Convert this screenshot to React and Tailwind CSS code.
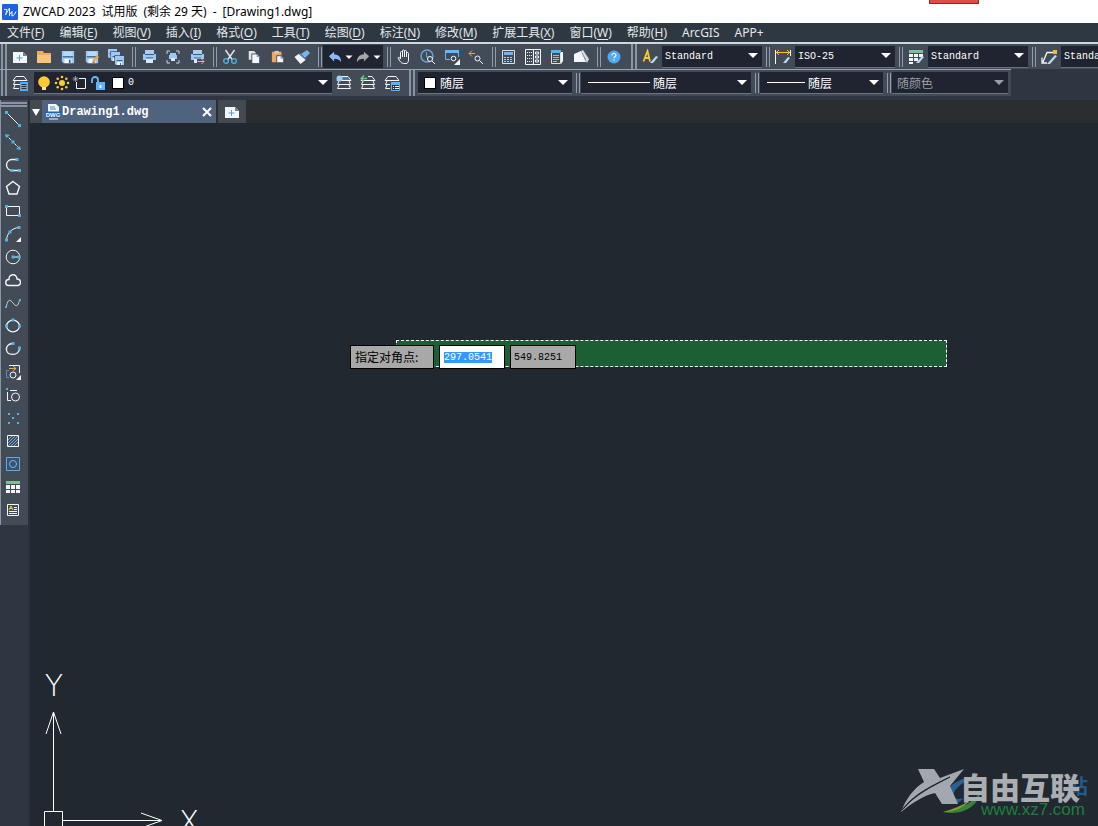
import { useEffect, useRef } from 'react';

const MENUS = [
  ['文件', 'F'],
  ['编辑', 'E'],
  ['视图', 'V'],
  ['插入', 'I'],
  ['格式', 'O'],
  ['工具', 'T'],
  ['绘图', 'D'],
  ['标注', 'N'],
  ['修改', 'M'],
  ['扩展工具', 'X'],
  ['窗口', 'W'],
  ['帮助', 'H'],
  ['ArcGIS'],
  ['APP+'],
];

const Svg = ({ children, size = 16 }) => (
  <svg width={size} height={size} viewBox="0 0 16 16" fill="none" stroke="none" aria-hidden="true">
    {children}
  </svg>
);

const W = '#f4f7fa';
const C = '#4db4e6';

const Floppy = () => (
  <>
    <path d="M1 1h14v14H3l-2-2z" fill="#9cc8f7" />
    <path d="M3 2h10v5H3z" fill="#b9dafb" />
    <path d="M2 7h12v1.500H2z" fill="#41658c" />
    <path d="M4 10h8v5H4z" fill={W} />
    <path d="M9 11h2v4H9z" fill="#41658c" />
  </>
);

const SmallFloppy = ({ x, y }) => (
  <g transform={`translate(${x} ${y})`}>
    <path d="M-.7-.7h10.400v10.400H-.7z" fill="#434b57" />
    <path d="M0 0h9v9H1L0 8z" fill="#9cc8f7" />
    <path d="M1.500 4h6v1h-6z" fill="#41658c" />
    <path d="M2 6h5v3H2z" fill={W} />
    <path d="M5 7h1v2H5z" fill="#41658c" />
  </g>
);

const Printer = () => (
  <>
    <path d="M4 1h9v4H4z" fill="#a9cdf5" />
    <path d="M2 5h13v6H2z" fill="#9cc8f7" />
    <path d="M4 5h9v1H4z" fill="#3d5878" />
    <path d="M5 9h7v5H5z" fill="#d9eafd" />
    <path d="M5 9h7" stroke="#3d5878" />
  </>
);

const Layers = () => (
  <path d="M4 1.500h8l3 4H1zM1.500 9.500h13M3 6l-1.500 3.500M13 6l1.500 3.500M1.500 13.500h13M3 10l-1.500 3.500M13 10l1.500 3.500" stroke={W} />
);

const icons = {
  newFile: (
    <>
      <path d="M1 3h10l4 4v7H1z" fill={W} />
      <path d="M11 3v4h4z" fill="#6f8193" />
      <path d="M7.500 6v6M4.500 9h6" stroke="#5a9fd0" />
    </>
  ),
  open: (
    <>
      <path d="M1 2h6l1 2h7v10H1z" fill="#f0aa62" />
      <path d="M1 6h14v8H1z" fill="#fbc27e" />
    </>
  ),
  save: <Floppy />,
  saveAs: (
    <>
      <Floppy />
      <path d="M8 15l1-4 5-5 2 2-5 5z" fill="#f0a54a" />
    </>
  ),
  saveAll: (
    <>
      <SmallFloppy x={0} y={0} />
      <SmallFloppy x={3} y={3} />
      <SmallFloppy x={7} y={7} />
    </>
  ),
  print: <Printer />,
  preview: (
    <>
      <path d="M2 5V2h3M11 2h3v3M14 11v3h-3M5 14H2v-3" stroke="#c5d5e4" />
      <path d="M5 4h6v2H5zM4 6h8v4H4z" fill="#9cc8f7" />
      <path d="M6 9h4v3H6z" fill="#d9eafd" />
    </>
  ),
  publish: (
    <>
      <Printer />
      <path d="M8 10h8v6H8z" fill="#434b57" />
      <path d="M8.500 12.500H15M12.500 10l2.500 2.500-2.500 2.500" stroke="#e9bd57" />
    </>
  ),
  cut: (
    <>
      <path d="M3.500 1l7 10M12.500 1l-7 10" stroke="#dce3ea" strokeWidth="1.500" />
      <circle cx="4" cy="12" r="2.300" stroke={C} strokeWidth="1.300" />
      <circle cx="12" cy="12" r="2.300" stroke={C} strokeWidth="1.300" />
    </>
  ),
  copy: (
    <>
      <path d="M2 1h6l2 2v8H2z" fill="#dfe4e9" />
      <path d="M5.500 4.500h6l3 3v8h-9z" fill={W} stroke="#3f4753" />
      <path d="M11.500 4.500v3h3" stroke="#7a8794" />
    </>
  ),
  paste: (
    <>
      <path d="M1 2h11v12H1z" fill="#f2a65c" />
      <path d="M4 1h5v3H4z" fill="#c9cfd6" />
      <path d="M6.500 6.500h5l3 3v5h-8z" fill={W} stroke="#3f4753" />
      <path d="M11.500 6.500v3h3" stroke="#7a8794" />
    </>
  ),
  brush: (
    <>
      <path d="M13 1l3 3-5 5-4-4z" fill="#77b5ef" />
      <path d="M6 4l6 6-2 2-6-6z" fill="#4d80b8" />
      <path d="M4.500 5l7 6-5 4-6-7z" fill={W} />
    </>
  ),
  undo: <path d="M1 7l6-5v3c5 0 8 3 8 9-2-3-4-4-8-4v3z" fill="#8cbcf5" />,
  redo: <path d="M15 7L9 2v3c-5 0-8 3-8 9 2-3 4-4 8-4v3z" fill="#a4a8ad" />,
  pan: (
    <path
      d="M4.500 10V3.500a1 1 0 0 1 2 0V8 2a1 1 0 0 1 2 0v6-5.500a1 1 0 0 1 2 0V8 4.500a1 1 0 0 1 2 0V11c0 2-1 3.500-2.500 3.500H7.500C5 14.500 3.500 11.500 2 9c0-1 1.500-1 2.500 1z"
      stroke={W}
    />
  ),
  zoomTime: (
    <>
      <circle cx="7" cy="7" r="6" stroke="#6aa7de" strokeWidth="1.400" />
      <path d="M6.500 3v5H9" stroke={C} />
      <circle cx="10" cy="10" r="2.500" stroke={W} fill="#434b57" />
      <path d="M12 12l3 3" stroke={W} />
    </>
  ),
  zoomWindow: (
    <>
      <path d="M6 10.500H1.500v-8h13V8" stroke="#6db4f2" />
      <path d="M1 1h14v3H1z" fill="#6db4f2" />
      <circle cx="9.500" cy="9.500" r="2.300" stroke={W} />
      <path d="M16 10v6h-6z" fill={W} />
    </>
  ),
  zoomPrev: (
    <>
      <path d="M1 4.500h6M4 1.500l-3 3 3 3" stroke="#d7ad68" />
      <circle cx="9.500" cy="9.500" r="2.500" stroke={W} />
      <path d="M11.500 11.500l3.500 3.500" stroke={W} />
    </>
  ),
  calc: (
    <>
      <path d="M1.500 1.500h12v13h-12z" stroke="#d7e1ea" />
      <path d="M3 3h9v3H3z" fill="#70b4ed" />
      <path d="M3 8.500h9M3 10.500h9M3 12.500h9" stroke="#a9d2f5" strokeDasharray="2 1" />
    </>
  ),
  palette: (
    <>
      <path d="M.5.5h15v15H.5zM8.500 1v14" stroke={W} />
      <path d="M2 3.500h5M2 6.500h5M2 9.500h5M2 12.500h5" stroke={W} strokeDasharray="1 1" />
      <path d="M10.500 3v2h3V3zM10.500 7v2h3V7zM10.500 11v2h3v-2z" stroke={W} />
    </>
  ),
  sheet: (
    <>
      <path d="M2.500 1.500h9v13h-9z" stroke="#d7e1ea" />
      <path d="M2 1h10v3H2z" fill="#5eb0f4" />
      <path d="M12 3h2v9l-2 3z" fill={W} />
      <path d="M4 6.500h6M4 8.500h6M4 10.500h6M4 12.500h4" stroke="#8dbcf0" />
    </>
  ),
  cleanup: (
    <>
      <path d="M1 5l7-3 5 11H1z" fill={W} />
      <path d="M8 2l2-1 6 9-2 4z" fill="#d9dce0" />
      <path d="M9 4l4 7" stroke="#8a929b" />
    </>
  ),
  help: (
    <>
      <circle cx="8" cy="8" r="6.500" fill="#4eaaf2" />
      <path d="M6 6.500c0-3 4-2.500 4-.3 0 1.300-2 1.300-2 3M8 10.500v1.300" stroke={W} strokeWidth="1.200" />
    </>
  ),
  textStyle: (
    <>
      <path d="M1.500 12.500L5.500 2 8 12.500M3 9h4.500" stroke="#f2c838" strokeWidth="1.800" />
      <path d="M8 14l6-7 2 1-5 6z" fill="#b9dcf4" />
    </>
  ),
  dimStyle: (
    <>
      <path d="M.5 1v14M15.500 1v6" stroke={W} />
      <path d="M1 3.500h14M4 1L1.500 3.500 4 6M12 1l2.500 2.500L12 6" stroke="#f2c838" />
      <path d="M8 14l5-6 2 1-4 5z" fill="#b9dcf4" />
    </>
  ),
  tableStyle: (
    <>
      <path d="M1 1h14v3H1z" fill="#7fc08f" />
      <path d="M1 5h4v3H1zM6 5h4v3H6zM11 5h4v3h-4zM1 9h4v3H1zM6 9h4v3H6zM1 13h4v2H1z" fill={W} />
      <path d="M8 14l6-7 2 1-5 6z" fill="#b9dcf4" />
    </>
  ),
  leaderStyle: (
    <>
      <path d="M2 13L6 3.500h6M1 8.500V14h5" stroke={W} strokeWidth="1.300" />
      <path d="M12 1h4v4h-4z" fill="#f2b92e" />
      <path d="M6 15l8-9 2 1-7 8z" fill="#b9dcf4" />
    </>
  ),
  layerProps: (
    <>
      <path d="M4 1.500h8l3 4H1zM1.500 9.500H8M3 6l-1.500 3.500M1.500 13.500H7M3 10l-1.500 3.500" stroke={W} />
      <path d="M8 7h8v9H8z" fill="#5fa9e6" />
      <path d="M9.500 9.500h5M9.500 11.500h5M9.500 13.500h5" stroke="#23364a" />
    </>
  ),
  layerMatch: (
    <>
      <Layers />
      <path d="M3 5l2-3h7l2 3z" fill="#487ca8" />
      <circle cx="3.500" cy="3.500" r="3" fill="#a3cdf4" />
    </>
  ),
  layerPrev: (
    <>
      <Layers />
      <path d="M0 0h8v5H0z" fill="#434b57" />
      <path d="M1 3.500h6M4 .5l-3 3 3 3" stroke="#5ed07b" strokeWidth="1.300" />
    </>
  ),
  layerState: (
    <>
      <path d="M4 1.500h8l3 4H1zM1.500 9.500H6M3 6l-1.500 3.500M1.500 13.500H6M3 10l-1.500 3.500" stroke={W} />
      <path d="M7.500 7.500h8v8h-8z" fill="#23364a" stroke="#5fb2f7" />
      <path d="M7 7h9v3H7z" fill="#5fb2f7" />
      <path d="M9 11.500h1M11 11.500h4M9 13.500h1M11 13.500h4" stroke={W} />
    </>
  ),
  bulb: (
    <>
      <circle cx="8" cy="7" r="5.800" fill="#fbc933" />
      <path d="M6 12h4v3H6z" fill="#f7e0a0" />
    </>
  ),
  sun: (
    <g fill="#fbc933">
      <circle cx="8" cy="8" r="3" />
      <circle cx="8" cy="2" r="1.300" />
      <circle cx="8" cy="14" r="1.300" />
      <circle cx="2" cy="8" r="1.300" />
      <circle cx="14" cy="8" r="1.300" />
      <circle cx="3.700" cy="3.700" r="1.300" />
      <circle cx="12.300" cy="3.700" r="1.300" />
      <circle cx="3.700" cy="12.300" r="1.300" />
      <circle cx="12.300" cy="12.300" r="1.300" />
    </g>
  ),
  frame: (
    <>
      <path d="M7 3.500h6.500v10h-9V7" stroke={W} />
      <path d="M3.500 1v6M.5 4h6M1.500 2l4 4M5.500 2l-4 4" stroke="#b8bcc2" strokeWidth=".7" />
    </>
  ),
  lock: (
    <>
      <path d="M2 8V5a3 3 0 0 1 6 0v3" stroke="#6cb8f5" strokeWidth="1.800" />
      <path d="M6 7h9v8H6z" fill="#5fb2f7" />
      <path d="M9.500 10h2v3h-2z" fill={W} />
    </>
  ),
  dwg: (
    <>
      <path d="M3 0h8l3 3v6H3z" fill={W} />
      <path d="M5 3h5M5 5h6" stroke="#4c86c9" />
      <path d="M0 7.500h16v6H0z" fill="#1f5fb4" />
      <path d="M4 15h9" stroke={W} />
      <text x="8" y="13" textAnchor="middle" fontSize="6" fontWeight="700" fontFamily="Liberation Sans, sans-serif" fill="#fff">DWG</text>
    </>
  ),
};

const Node = ({ x, y }) => <rect x={x - 1.5} y={y - 1.5} width="3" height="3" fill={C} />;

const drawTools = [
  ['直线', <><path d="M2 2l12 12" stroke={W} /><Node x={1.5} y={1.5} /><Node x={14.5} y={14.5} /></>],
  ['构造线', <><path d="M1 1l14 14" stroke={W} strokeDasharray="3 1" /><path d="M0 0l5 1-4 3zM16 16l-5-1 4-3z" fill={C} /><Node x={8} y={8} /></>],
  ['多段线', <><path d="M11 2.500H7a5 5 0 0 0 0 11h7" stroke={W} strokeWidth="1.300" /><Node x={12} y={2.5} /><Node x={7} y={13.5} /><Node x={14.5} y={13.5} /></>],
  ['正多边形', <path d="M8 1.500l6.500 5L12 14H4L1.500 6.500z" stroke={W} strokeWidth="1.400" />],
  ['矩形', <><path d="M1.500 3.500h13v9h-13z" stroke={W} /><Node x={1.5} y={3.5} /><Node x={14.5} y={12.5} /></>],
  ['圆弧', <><path d="M1.500 14C2 7 7 2 14 1.500" stroke={W} /><Node x={1.5} y={14} /><Node x={5} y={6} /><Node x={14} y={1.5} /><path d="M16 11v5h-5z" fill={W} /></>],
  ['圆', <><circle cx="8" cy="8" r="6.800" stroke={W} /><path d="M8 8h6" stroke={W} /><Node x={8} y={8} /><Node x={14} y={8} /></>],
  ['修订云线', <path d="M3.500 13.500a3 3 0 0 1 .5-6c-.5-6 8-6.500 8-.5 4.500 0 4.500 6.500.5 6.500z" stroke={W} strokeWidth="1.400" />],
  ['样条曲线', <><path d="M1.500 11C3 4 5 4 8 8s5 4 6.500-3" stroke="#c3cdd7" /><rect x="0" y="11" width="2" height="2" fill={C} /><rect x="14" y="4" width="2" height="2" fill={C} /></>],
  ['椭圆', <><ellipse cx="8" cy="8" rx="6.500" ry="5.800" stroke={W} strokeWidth="1.300" /><Node x={1.5} y={8} /><Node x={14.5} y={8} /><Node x={8} y={2} /></>],
  ['椭圆弧', <><path d="M8 2.500C3 2.500 1 6 1.500 9c1 6 12 6 13-1" stroke={W} strokeWidth="1.300" /><Node x={8} y={2.5} /><Node x={14.5} y={7} /></>],
  ['插入块', <><path d="M4 1.500h10.500V9" stroke={W} /><path d="M4 4.500h7M8 2l3 2.500L8 7" stroke="#e3ae4d" /><path d="M4 6.500H1.500v7H4" stroke="#5b87d8" /><circle cx="8" cy="11" r="3" stroke={W} /><path d="M16 11v5h-5z" fill={W} /></>],
  ['创建块', <><path d="M12 3.500H5M2.500 5v8.500H6" stroke={W} /><circle cx="10.500" cy="10" r="4" stroke={W} /><rect x="1" y="1" width="2" height="2" fill={C} /></>],
  ['点', <><rect x="3" y="3" width="2" height="2" fill={C} /><rect x="12" y="3" width="2" height="2" fill={C} /><rect x="7" y="7" width="2" height="2" fill={C} /><rect x="3" y="12" width="2" height="2" fill={C} /><rect x="12" y="12" width="2" height="2" fill={C} /></>],
  ['图案填充', <><path d="M3 7l4-4M3 10l7-7M3 13L13 3M6 13l7-7M9 13l4-4" stroke="#6eabea" /><path d="M2.500 2.500h11v11h-11z" stroke={W} /></>],
  ['面域', <><path d="M1.500 1.500h13v13h-13z" fill="#34536f" stroke="#62a9e8" /><circle cx="8" cy="8" r="3.500" stroke="#78b9ee" /></>],
  ['表格', <><path d="M1 2h14v3H1z" fill="#7fc08f" /><path d="M1 6h4v4H1zM6 6h4v4H6zM11 6h4v4h-4zM1 11h4v3H1zM6 11h4v3H6zM11 11h4v3h-4z" fill={W} /></>],
  ['多行文字', <><path d="M2.500 2.500h11v11h-11z" stroke={W} /><path d="M4 8l2-4 2 4M5 6.500h2" stroke="#f2d238" /><path d="M9 5.500h3M9 7.500h3M4 9.500h8M4 11.500h8" stroke={W} /></>],
];

const ToolButton = ({ label, icon, size }) => (
  <button aria-label={label} className="flex h-6 w-6 shrink-0 items-center justify-center">
    <Svg size={size}>{icons[icon]}</Svg>
  </button>
);

// double vertical bar between groups of one toolbar
const Separator = () => (
  <div className="flex h-5 w-[9px] shrink-0 justify-end gap-0.5 pr-px">
    <div className="w-px bg-[#8f9cab]" />
    <div className="w-px bg-[#8f9cab]" />
  </div>
);

// grip at the start of a toolbar
const Grip = () => (
  <div className="mr-px flex w-[7px] shrink-0 gap-0.5 self-stretch pl-px">
    <div className="w-0.5 bg-[#8795a5]" />
    <div className="w-0.5 bg-[#8795a5]" />
  </div>
);

const Caret = () => (
  <svg width="10" height="6" viewBox="0 0 10 6" aria-hidden="true">
    <path d="M0 0h10L5 5z" fill="currentColor" />
  </svg>
);

const Combo = ({ label, value, className, selectClass, children, disabled }) => (
  <div
    className={`relative flex h-[22px] shrink-0 items-center border-b border-[#6a7380] bg-[#1f2430] ${disabled ? 'text-[#9a9fa5]' : 'text-white'} ${className}`}
  >
    {children}
    <select
      aria-label={label}
      disabled={disabled}
      className={`h-full min-w-0 flex-1 appearance-none bg-transparent outline-none disabled:opacity-100 ${selectClass}`}
    >
      <option>{value}</option>
    </select>
    <div className="pointer-events-none absolute right-1 flex">
      <Caret />
    </div>
  </div>
);

const MONO = "font-['Liberation_Mono','Noto_Sans_CJK_SC',monospace] text-[10px]";

const Menus = () => (
  <nav className="flex h-[19px] shrink-0 items-center gap-px bg-[#2e3840] text-[12px] text-[#e4e7ea]">
    {MENUS.map(([name, key]) => (
      <button key={name} className="h-full shrink-0 px-[7px] leading-[18px] whitespace-nowrap">
        {name}
        {key && (
          <>
            (<span className="underline underline-offset-2">{key}</span>)
          </>
        )}
      </button>
    ))}
  </nav>
);

const StandardBar = () => (
  <div className="flex h-[27px] shrink-0 items-center overflow-hidden border-t-2 border-[#cbd8e2] bg-[#434b57]">
    <Grip />
    <ToolButton label="新建" icon="newFile" />
    <ToolButton label="打开" icon="open" />
    <ToolButton label="保存" icon="save" size={14} />
    <ToolButton label="另存为" icon="saveAs" size={14} />
    <ToolButton label="全部保存" icon="saveAll" />
    <Separator />
    <ToolButton label="打印" icon="print" />
    <ToolButton label="打印预览" icon="preview" />
    <ToolButton label="发布" icon="publish" />
    <Separator />
    <ToolButton label="剪切" icon="cut" />
    <ToolButton label="复制" icon="copy" size={14} />
    <ToolButton label="粘贴" icon="paste" size={14} />
    <ToolButton label="特性匹配" icon="brush" />
    <Separator />
    <div className="flex h-[23px] w-[60px] shrink-0 items-center justify-around bg-[#1f2430] pl-[3px] text-white">
      <button aria-label="放弃"><Svg size={14}>{icons.undo}</Svg></button>
      <button aria-label="放弃列表"><Svg size={8}><path d="M1 5h14l-7 7z" fill="#fff" /></Svg></button>
      <button aria-label="重做"><Svg size={14}>{icons.redo}</Svg></button>
      <button aria-label="重做列表"><Svg size={8}><path d="M1 5h14l-7 7z" fill="#fff" /></Svg></button>
    </div>
    <Separator />
    <ToolButton label="平移" icon="pan" />
    <ToolButton label="实时缩放" icon="zoomTime" />
    <ToolButton label="窗口缩放" icon="zoomWindow" />
    <ToolButton label="缩放上一个" icon="zoomPrev" />
    <Separator />
    <ToolButton label="计算器" icon="calc" />
    <ToolButton label="工具选项板" icon="palette" />
    <ToolButton label="图纸集" icon="sheet" />
    <ToolButton label="清理" icon="cleanup" />
    <Separator />
    <ToolButton label="帮助" icon="help" />
    <div className="w-1 shrink-0" />
    <Grip />
    <ToolButton label="文字样式" icon="textStyle" />
    <Combo label="当前文字样式" value="Standard" className="w-[100px]" selectClass={`pl-[3px] ${MONO}`} />
    <Separator />
    <ToolButton label="标注样式" icon="dimStyle" />
    <Combo label="当前标注样式" value="ISO-25" className="w-[100px]" selectClass={`pl-[3px] ${MONO}`} />
    <Separator />
    <ToolButton label="表格样式" icon="tableStyle" />
    <Combo label="当前表格样式" value="Standard" className="w-[100px]" selectClass={`pl-[3px] ${MONO}`} />
    <Separator />
    <ToolButton label="多重引线样式" icon="leaderStyle" />
    <Combo label="当前引线样式" value="Standard" className="w-[100px]" selectClass={`pl-[3px] ${MONO}`} />
  </div>
);

const LayerBar = () => (
  <div className="flex h-[27px] shrink-0 bg-[#2f3641]">
    <div className="flex h-full shrink-0 items-center border-t border-[#97a4b1] bg-[#434b57] pr-[3px] font-['Noto_Sans_CJK_SC',sans-serif] text-[12px]">
      <Grip />
      <ToolButton label="图层特性" icon="layerProps" />
      <Combo label="图层" value="0" className="ml-0.5 w-[298px]" selectClass={`pl-1 ${MONO}`}>
        <div className="flex items-center gap-0.5 pl-0.5">
          <Svg>{icons.bulb}</Svg>
          <Svg>{icons.sun}</Svg>
          <Svg>{icons.frame}</Svg>
          <Svg>{icons.lock}</Svg>
          <div className="ml-1 h-3 w-3 border border-black bg-white" />
        </div>
      </Combo>
      <ToolButton label="图层置为当前" icon="layerMatch" />
      <ToolButton label="上一个图层" icon="layerPrev" />
      <ToolButton label="图层状态" icon="layerState" />
      <div className="w-1" />
      <Grip />
      <Combo label="颜色" value="随层" className="ml-0.5 w-[154px]" selectClass="pl-1">
        <div className="ml-1.5 h-3 w-3 border border-black bg-white" />
      </Combo>
      <Separator />
      <Combo label="线型" value="随层" className="w-[170px]" selectClass="pl-[3px]">
        <div className="ml-[7px] h-px w-[62px] bg-white" />
      </Combo>
      <Separator />
      <Combo label="线宽" value="随层" className="w-[123px]" selectClass="pl-[3px]">
        <div className="ml-[7px] h-px w-[38px] bg-white" />
      </Combo>
      <Separator />
      <Combo label="打印样式" value="随颜色" className="w-[116px]" selectClass="pl-[5px]" disabled />
    </div>
  </div>
);

const DrawBar = () => (
  <aside className="w-[30px] shrink-0 border-r-2 border-[#2a3039] bg-[#2f3641]">
    <div className="border-l border-[#8795a5] bg-[#434b57] pt-0.5 pb-1">
      <div className="mr-px flex flex-col gap-px">
        <div className="h-0.5 bg-[#8795a5]" />
        <div className="h-0.5 bg-[#8795a5]" />
      </div>
      <div className="flex flex-col">
        {drawTools.map(([label, icon]) => (
          <button key={label} aria-label={label} className="flex h-[23px] w-6 items-center justify-center">
            <Svg>{icon}</Svg>
          </button>
        ))}
      </div>
    </div>
  </aside>
);

const Tabs = () => (
  <div className="flex h-[23px] shrink-0 bg-[#2b2d31] text-white">
    <button aria-label="文档列表" className="flex w-3 items-center justify-center bg-[#444a52]">
      <svg width="8" height="8" viewBox="0 0 8 8"><path d="M0 1h8L4 8z" fill="#fff" /></svg>
    </button>
    <div className="flex w-[174px] items-center bg-[#50637e] px-[3px]">
      <Svg>{icons.dwg}</Svg>
      <span className="ml-px flex-1 font-['Liberation_Mono',monospace] text-[12px] font-bold">Drawing1.dwg</span>
      <button aria-label="关闭" className="flex w-3 justify-center">
        <svg width="10" height="10" viewBox="0 0 10 10">
          <path d="M1 1l8 8M9 1l-8 8" stroke="#fff" strokeWidth="2" />
        </svg>
      </button>
    </div>
    <button aria-label="新建文档" className="ml-0.5 flex w-7 items-center justify-center bg-[#444a52]">
      <Svg>{icons.newFile}</Svg>
    </button>
  </div>
);

const Ucs = () => (
  <svg
    className="absolute bottom-0 left-0 font-['DejaVu_Sans',sans-serif] text-[30px] font-extralight"
    width="180"
    height="160"
    viewBox="0 0 180 160"
    fill="none"
    stroke="#fff"
  >
    <text x="24" y="30" textAnchor="middle" fill="#fff" stroke="none">Y</text>
    <path d="M23.500 46v99M16 68l7.500-22L31 68" />
    <path d="M14.500 145.500h18v18h-18z" />
    <path d="M33 154.500h99M111 147l21 7.500-21 7.500" />
    <text x="159" y="166" textAnchor="middle" fill="#fff" stroke="none">X</text>
  </svg>
);

const Watermark = () => (
  <div className="pointer-events-none absolute right-2 bottom-1 h-16 w-[192px]">
    <svg className="absolute inset-0" width="192" height="64" viewBox="0 0 192 64">
      <path d="M78 19C61 19 48 29 46 39c0 8 15 9 19 1-4 2-9 1-10-2 1-8 11-15 23-19z" fill="#2a6195" />
      <path d="M45 54c20 4 36-6 38-22-5 11-18 18-38 22z" fill="#35833b" />
      <path d="M45 54c12 0 20-4 26-11-8 5-16 8-26 11z" fill="#8b9a2f" />
      <path d="M20 11h16l6 9 24-9L52 28l8 18H44l-7-11C24 38 13 46 3 54c5-13 12-23 23-30z" fill="#a3a8ae" />
      <path d="M4 52C16 36 33 28 52 19 33 29 18 36 4 52z" fill="#22282f" stroke="#22282f" />
    </svg>
    <span className="absolute top-3 right-0.5 font-['Noto_Sans_CJK_SC',sans-serif] text-[20px] leading-8 font-bold text-[#205a91]">站</span>
    <span className="absolute top-3 right-2.5 font-['Noto_Sans_CJK_SC',sans-serif] text-[30px] leading-8 font-black whitespace-nowrap text-[#aaaeb3]">自由互联</span>
    <span className="absolute right-[5px] bottom-0.5 font-['Liberation_Sans',sans-serif] text-[17px] leading-5 text-[#1c7f3c]">www.xz7.com</span>
  </div>
);

const DynamicInput = () => {
  const xRef = useRef(null);

  useEffect(() => {
    xRef.current.focus();
    xRef.current.select();
  }, []);

  return (
    <div className="absolute top-[222px] left-[320px] flex gap-[5px] text-black">
      <label
        htmlFor="corner-x"
        className="h-6 w-[84px] border border-black bg-[#a8a8a8] pl-1 font-['Noto_Sans_CJK_SC',sans-serif] text-[12px] leading-[22px] whitespace-nowrap"
      >
        指定对角点:
      </label>
      <input
        id="corner-x"
        ref={xRef}
        defaultValue="297.0541"
        className={`h-6 w-[66px] border border-black bg-white pl-1 outline-none selection:bg-[#3399ff] selection:text-white ${MONO}`}
      />
      <input
        aria-label="Y"
        defaultValue="549.8251"
        className={`h-6 w-[66px] border border-black bg-[#a8a8a8] pl-[3px] outline-none ${MONO}`}
      />
    </div>
  );
};

const App = () => {
  return (
    <div className="flex h-screen flex-col overflow-hidden bg-[#22282f] font-['Noto_Sans','Noto_Sans_CJK_SC',sans-serif]">
      <header className="relative flex h-[23px] shrink-0 items-center bg-white pl-0.5 text-[12px] text-black">
        <svg width="16" height="16" viewBox="0 0 16 16" fill="none">
          <rect width="16" height="16" rx="1" fill="#1d62e0" />
          <path d="M2 5.500h3L3.500 11l4-7v8" stroke="#dbe8ff" />
          <path d="M8 10l2-2.500V12c2 0 3-2.500 4-4.500" stroke="#fff" />
        </svg>
        <h1 className="ml-[5px] flex gap-1.5 whitespace-nowrap">
          <span>ZWCAD 2023</span>
          <span>试用版</span>
          <span>(剩余 29 天)</span>
          <span>-</span>
          <span>[Drawing1.dwg]</span>
        </h1>
        <div className="absolute top-0 right-[119px] h-1 w-[50px] border border-t-0 border-[#8c2a2a] bg-[#df4b46]" />
      </header>
      <Menus />
      <StandardBar />
      <LayerBar />
      <div className="h-1 shrink-0 bg-[#2f3641]" />
      <div className="flex min-h-0 flex-1">
        <DrawBar />
        <main className="flex min-w-0 flex-1 flex-col">
          <Tabs />
          <div className="relative flex-1 overflow-hidden bg-[#22282f]">
            <div className="absolute top-[217px] left-[366px] h-[27px] w-[551px] border border-dashed border-white bg-[#1c5f34]" />
            <DynamicInput />
            <Ucs />
            <Watermark />
          </div>
        </main>
      </div>
    </div>
  );
};

export default App;
